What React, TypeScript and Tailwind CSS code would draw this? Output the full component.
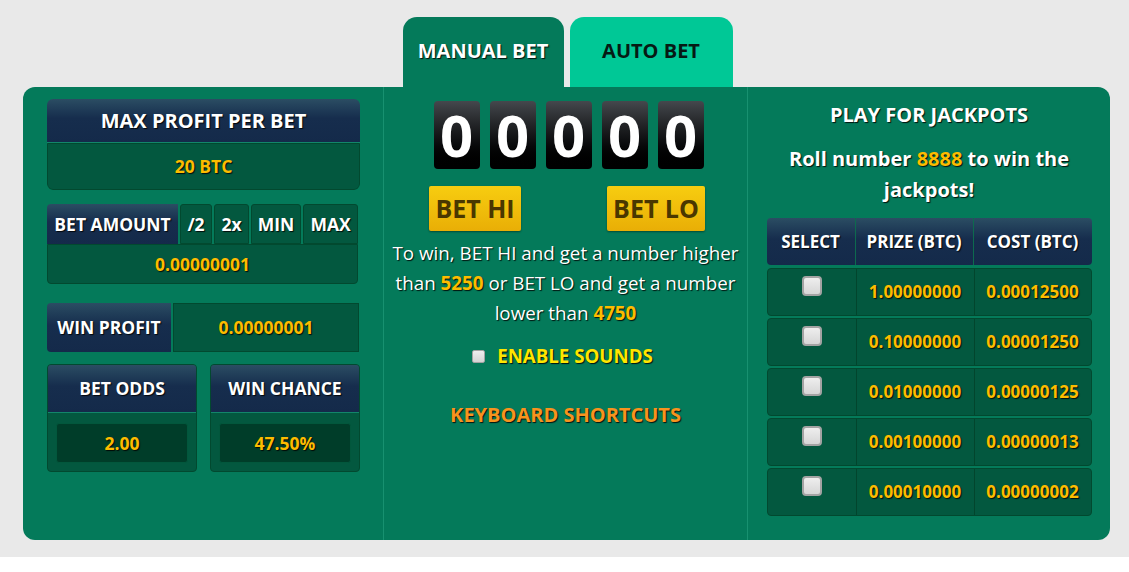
const shadow = "[text-shadow:1px_1px_1px_rgba(0,0,0,0.85)]";
const navy = "bg-linear-to-b from-[#2b4d63] via-[#162d4d] via-45% to-[#142a4a]";
const cell = "bg-[#03583f] border border-[#02492f]";

function Digit() {
  return (
    <div className="w-[46px] h-[68px] rounded-[4px] bg-linear-to-b from-[#45484d] to-[#000000] flex items-center justify-center text-white text-[58px] font-bold leading-none">
      0
    </div>
  );
}

function Check() {
  return <div className="w-[20px] h-[20px] rounded-[4px] bg-linear-to-b from-[#eeeeee] to-[#d6d6d6] border-2 border-[#a3a3a3]" />;
}

const jackpots = [
  ["1.00000000", "0.00012500"],
  ["0.10000000", "0.00001250"],
  ["0.01000000", "0.00000125"],
  ["0.00100000", "0.00000013"],
  ["0.00010000", "0.00000002"],
];

export default function App() {
  return (
    <div className="font-['Open_Sans',sans-serif]">
      <div className="bg-[#e9e9e9] h-[557px] pt-[17px] pl-[23px]">
        <div className="w-[1087px]">
          <div className="flex justify-center gap-[6px] h-[70px] pl-[2px]">
            <div className="w-[161px] rounded-t-[14px] bg-[#047a5a] flex items-center justify-center pb-[2px]">
              <span className={`text-white text-[20px] font-bold ${shadow}`}>MANUAL BET</span>
            </div>
            <div className="w-[163px] rounded-t-[14px] bg-[#00c896] flex items-center justify-center pb-[2px]">
              <span className="text-[#061a14] text-[20px] font-bold">AUTO BET</span>
            </div>
          </div>

          <div className="h-[453px] rounded-[12px] bg-[#047a5a] flex">
            {/* left */}
            <div className="w-[361px] border-r border-[#189170] pl-[24px] pt-[12px]">
              <div className="w-[313px] rounded-[6px] overflow-hidden">
                <div className={`h-[43px] ${navy} flex items-center justify-center text-white text-[20px] font-bold ${shadow}`}>
                  MAX PROFIT PER BET
                </div>
                <div className="h-[1px] bg-[#12866a]" />
                <div className={`h-[47px] ${cell} rounded-b-[6px] flex items-center justify-center text-[#fcbc00] text-[17.5px] font-bold ${shadow}`}>
                  20 BTC
                </div>
              </div>

              <div className="mt-[14px] w-[311px]">
                <div className="flex h-[40px] gap-[2px]">
                  <div className={`w-[131px] rounded-tl-[4px] ${navy} flex items-center justify-center text-white text-[17.5px] font-bold ${shadow}`}>
                    BET AMOUNT
                  </div>
                  {[
                    ["/2", "w-[32px]"],
                    ["2x", "w-[35px]"],
                    ["MIN", "w-[50px]"],
                    ["MAX", "w-[55px]"],
                  ].map(([t, w]) => (
                    <div key={t} className={`${w} ${cell} rounded-t-[3px] flex items-center justify-center text-white text-[17.5px] font-bold ${shadow}`}>
                      {t}
                    </div>
                  ))}
                </div>
                <div className={`h-[40px] ${cell} rounded-b-[4px] flex items-center justify-center text-[#fcbc00] text-[17.5px] font-bold ${shadow}`}>
                  0.00000001
                </div>
              </div>

              <div className="mt-[19px] w-[312px] flex h-[49px]">
                <div className={`w-[124px] rounded-l-[4px] ${navy} flex items-center justify-center text-white text-[17.5px] font-bold ${shadow}`}>
                  WIN PROFIT
                </div>
                <div className={`flex-1 ml-[2px] ${cell} flex items-center justify-center text-[#fcbc00] text-[17.5px] font-bold ${shadow}`}>
                  0.00000001
                </div>
              </div>

              <div className="mt-[12px] flex gap-[13px]">
                {[
                  ["BET ODDS", "2.00"],
                  ["WIN CHANCE", "47.50%"],
                ].map(([h, v]) => (
                  <div key={h} className="w-[150px] h-[108px] rounded-[4px] overflow-hidden bg-[#03583f] border border-[#02492f]">
                    <div className={`h-[48px] ${navy} border-b border-[#12866a] flex items-center justify-center text-white text-[17.5px] font-bold ${shadow}`}>
                      {h}
                    </div>
                    <div className="px-[8px] pt-[10px]">
                      <div className={`h-[40px] rounded-[3px] bg-[#003d29] border border-[#02573c] flex items-center justify-center text-[#fcbc00] text-[17.5px] font-bold ${shadow}`}>
                        {v}
                      </div>
                    </div>
                  </div>
                ))}
              </div>
            </div>

            {/* middle */}
            <div className="w-[364px] border-r border-[#189170] pt-[14px] flex flex-col items-center">
              <div className="flex gap-[10px] pl-[6px]">
                <Digit />
                <Digit />
                <Digit />
                <Digit />
                <Digit />
              </div>
              <div className="mt-[17px] w-full flex justify-between pl-[45px] pr-[42px]">
                <div className="w-[92px] h-[45px] rounded-[2px] bg-linear-to-b from-[#f7cd10] to-[#e9ae06] shadow-[0_1px_2px_rgba(0,0,0,0.4)] flex items-center justify-center text-[#4a3700] text-[25px] font-bold">
                  BET HI
                </div>
                <div className="w-[98px] h-[45px] rounded-[2px] bg-linear-to-b from-[#f7cd10] to-[#e9ae06] shadow-[0_1px_2px_rgba(0,0,0,0.4)] flex items-center justify-center text-[#4a3700] text-[25px] font-bold">
                  BET LO
                </div>
              </div>
              <p className={`mt-[7px] w-[360px] text-center text-white text-[18.8px] leading-[30px] ${shadow}`}>
                To win, BET HI and get a number higher than <span className="text-[#fcbc00] font-bold">5250</span> or BET LO and get a number lower than{" "}
                <span className="text-[#fcbc00] font-bold">4750</span>
              </p>
              <div className="mt-[14px] flex items-center gap-[12px] pr-[6px]">
                <div className="w-[13px] h-[13px] rounded-[2px] bg-linear-to-b from-[#eeeeee] to-[#d4d4d4] border border-[#a3a3a3]" />
                <span className={`text-[#ffe500] text-[18.7px] font-bold ${shadow}`}>ENABLE SOUNDS</span>
              </div>
              <div className={`mt-[30px] text-[#f7931e] text-[20px] font-bold ${shadow}`}>KEYBOARD SHORTCUTS</div>
            </div>

            {/* right */}
            <div className="flex-1 pt-[13px] flex flex-col items-center">
              <div className={`text-white text-[20px] font-bold ${shadow}`}>PLAY FOR JACKPOTS</div>
              <p className={`mt-[13px] w-[300px] text-center text-white text-[20px] font-bold leading-[31px] ${shadow}`}>
                Roll number <span className="text-[#fcbc00]">8888</span> to win the jackpots!
              </p>
              <div className="mt-[13px] w-[325px] flex flex-col gap-[2px]">
                <div className={`flex h-[47px] rounded-[4px] overflow-hidden ${navy} mb-[1px]`}>
                  {[
                    ["SELECT", "w-[88px]"],
                    ["PRIZE (BTC)", "w-[118px] border-l border-[#0d6a4e]"],
                    ["COST (BTC)", "flex-1 border-l border-[#0d6a4e]"],
                  ].map(([t, w]) => (
                    <div key={t} className={`${w} flex items-center justify-center text-white text-[17px] font-bold ${shadow}`}>
                      {t}
                    </div>
                  ))}
                </div>
                {jackpots.map(([p, c]) => (
                  <div key={p} className="flex h-[48px] rounded-[4px] bg-[#03583f] border border-[#02492f]">
                    <div className="w-[88px] flex justify-center pt-[7px]">
                      <Check />
                    </div>
                    <div className={`w-[118px] border-l border-[#02452d] flex items-center justify-center text-[#fcbc00] text-[17px] font-bold ${shadow}`}>
                      {p}
                    </div>
                    <div className={`flex-1 border-l border-[#02452d] flex items-center justify-center text-[#fcbc00] text-[17px] font-bold ${shadow}`}>
                      {c}
                    </div>
                  </div>
                ))}
              </div>
            </div>
          </div>
        </div>
      </div>
    </div>
  );
}
